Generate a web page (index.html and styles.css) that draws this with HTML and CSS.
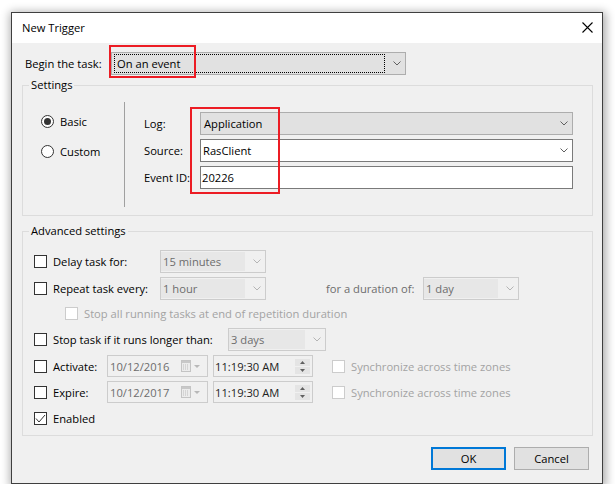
FILE: index.html
```html
<!DOCTYPE html>
<html>
<head>
<meta charset="utf-8">
<title>New Trigger</title>
<link rel="stylesheet" href="styles.css">
</head>
<body>
<div class="window">
  <div class="titlebar">
    <span class="title">New Trigger</span>
    <svg class="close" width="11" height="11" viewBox="0 0 11 11"><path d="M0.5 0.5L10.5 10.5M10.5 0.5L0.5 10.5" stroke="#000" stroke-width="1.1" fill="none"/></svg>
  </div>
  <div class="content">
    <div class="begin-row">
      <span class="begin-label">Begin the task:</span>
      <div class="combo combo-begin">
        <span class="focus">On an event</span>
        <span class="chev"><svg width="8" height="5" viewBox="0 0 8 5"><polyline points="0.5,0.5 4,4 7.5,0.5" fill="none" stroke="#606060" stroke-width="1"/></svg></span>
        <span class="highlight hl-begin"></span>
      </div>
    </div>

    <div class="group settings">
      <div class="group-title">Settings</div>
      <div class="settings-body">
        <div class="radios">
          <div class="radio-row"><span class="radio checked"><span class="dot"></span></span><span>Basic</span></div>
          <div class="radio-row"><span class="radio"></span><span>Custom</span></div>
        </div>
        <div class="sep"></div>
        <div class="fields">
          <span class="flabel">Log:</span>
          <div class="combo combo-gray"><span class="val">Application</span><span class="chev"><svg width="8" height="5" viewBox="0 0 8 5"><polyline points="0.5,0.5 4,4 7.5,0.5" fill="none" stroke="#606060" stroke-width="1"/></svg></span></div>
          <span class="flabel">Source:</span>
          <div class="combo combo-white"><span class="val">RasClient</span><span class="chev"><svg width="8" height="5" viewBox="0 0 8 5"><polyline points="0.5,0.5 4,4 7.5,0.5" fill="none" stroke="#606060" stroke-width="1"/></svg></span></div>
          <span class="flabel">Event ID:</span>
          <div class="combo combo-white textbox"><span class="val">20226</span></div>
          <span class="highlight hl-fields"></span>
        </div>
      </div>
    </div>

    <div class="group advanced">
      <div class="group-title">Advanced settings</div>

      <div class="arow r1">
        <span class="cb"></span>
        <span class="alabel w-delay">Delay task for:</span>
        <div class="combo dis w106"><span class="val">15 minutes</span><span class="chev"><svg width="8" height="5" viewBox="0 0 8 5"><polyline points="0.5,0.5 4,4 7.5,0.5" fill="none" stroke="#b4b4b4" stroke-width="1"/></svg></span></div>
      </div>

      <div class="arow r2">
        <span class="cb"></span>
        <span class="alabel w-delay">Repeat task every:</span>
        <div class="combo dis w106"><span class="val">1 hour</span><span class="chev"><svg width="8" height="5" viewBox="0 0 8 5"><polyline points="0.5,0.5 4,4 7.5,0.5" fill="none" stroke="#b4b4b4" stroke-width="1"/></svg></span></div>
        <span class="dur-label">for a duration of:</span>
        <div class="combo dis w96"><span class="val">1 day</span><span class="chev"><svg width="8" height="5" viewBox="0 0 8 5"><polyline points="0.5,0.5 4,4 7.5,0.5" fill="none" stroke="#b4b4b4" stroke-width="1"/></svg></span></div>
      </div>

      <div class="arow r3">
        <span class="cb dis"></span>
        <span class="alabel muted">Stop all running tasks at end of repetition duration</span>
      </div>

      <div class="arow r4">
        <span class="cb"></span>
        <span class="alabel w-stop">Stop task if it runs longer than:</span>
        <div class="combo dis w98"><span class="val">3 days</span><span class="chev"><svg width="8" height="5" viewBox="0 0 8 5"><polyline points="0.5,0.5 4,4 7.5,0.5" fill="none" stroke="#b4b4b4" stroke-width="1"/></svg></span></div>
      </div>

      <div class="arow dtrow r5">
        <span class="cb"></span>
        <span class="alabel w-act">Activate:</span>
        <div class="dtp date"><span class="dval">10/12/2016</span>
          <svg class="cal" width="20" height="12" viewBox="0 0 20 12"><rect x="0.5" y="0.5" width="9" height="11" fill="#ececec" stroke="#c4c4c4"/><rect x="1" y="1" width="8" height="2" fill="#c8c8c8"/><path d="M2 5h1M4 5h1M6 5h1M2 7h1M4 7h1M6 7h1M2 9h1M4 9h1M6 9h1" stroke="#bdbdbd" stroke-width="1"/><polygon points="13,5 19,5 16,8" fill="#b8b8b8"/></svg>
        </div>
        <div class="dtp time"><span class="tval">11:19:30 AM</span>
          <span class="spin"><span class="sbtn"><svg width="5" height="3" viewBox="0 0 5 3"><polygon points="0,3 5,3 2.5,0" fill="#606060"/></svg></span><span class="sbtn"><svg width="5" height="3" viewBox="0 0 5 3"><polygon points="0,0 5,0 2.5,3" fill="#606060"/></svg></span></span>
        </div>
        <span class="cb dis sync"></span>
        <span class="alabel muted">Synchronize across time zones</span>
      </div>

      <div class="arow dtrow r6">
        <span class="cb"></span>
        <span class="alabel w-act">Expire:</span>
        <div class="dtp date"><span class="dval">10/12/2017</span>
          <svg class="cal" width="20" height="12" viewBox="0 0 20 12"><rect x="0.5" y="0.5" width="9" height="11" fill="#ececec" stroke="#c4c4c4"/><rect x="1" y="1" width="8" height="2" fill="#c8c8c8"/><path d="M2 5h1M4 5h1M6 5h1M2 7h1M4 7h1M6 7h1M2 9h1M4 9h1M6 9h1" stroke="#bdbdbd" stroke-width="1"/><polygon points="13,5 19,5 16,8" fill="#b8b8b8"/></svg>
        </div>
        <div class="dtp time"><span class="tval">11:19:30 AM</span>
          <span class="spin"><span class="sbtn"><svg width="5" height="3" viewBox="0 0 5 3"><polygon points="0,3 5,3 2.5,0" fill="#606060"/></svg></span><span class="sbtn"><svg width="5" height="3" viewBox="0 0 5 3"><polygon points="0,0 5,0 2.5,3" fill="#606060"/></svg></span></span>
        </div>
        <span class="cb dis sync"></span>
        <span class="alabel muted">Synchronize across time zones</span>
      </div>

      <div class="arow r7">
        <span class="cb"><svg width="11" height="11" viewBox="0 0 11 11"><polyline points="1,5.5 4,9 10,2" fill="none" stroke="#333" stroke-width="1"/></svg></span>
        <span class="alabel">Enabled</span>
      </div>
    </div>

    <div class="buttons">
      <div class="btn btn-ok">OK</div>
      <div class="btn">Cancel</div>
    </div>
  </div>
</div>
</body>
</html>
```

FILE: styles.css
```css
* { box-sizing: border-box; }
html, body { margin: 0; }
body {
  background: #ffffff;
  padding: 12px 0 0 11px;
  font-family: "Open Sans", "Noto Sans", sans-serif;
  font-size: 11.2px;
  color: #000;
}
.window {
  width: 592px;
  height: 472px;
  border: 1px solid #3f3f3f;
  background: #f0f0f0;
  box-shadow: 1px 2px 9px 2px rgba(0, 0, 0, 0.33);
  display: flex;
  flex-direction: column;
}
.titlebar {
  flex: none;
  height: 30px;
  background: #fff;
  display: flex;
  align-items: center;
  justify-content: space-between;
  padding: 0 9px 1px 10px;
}
.close { display: block; }
.content { padding: 0 9px 0 10px; }

/* combos */
.combo {
  position: relative;
  display: flex;
  align-items: center;
  height: 23px;
  border: 1px solid #adadad;
}
.chev {
  flex: none;
  width: 20px;
  height: 100%;
  display: flex;
  align-items: center;
  padding-left: 8px;
}
.chev svg { display: block; }
.val { flex: 1; white-space: nowrap; }

.begin-row {
  display: flex;
  align-items: center;
  margin-top: 9px;
  height: 23px;
}
.begin-label { margin-left: 3px; width: 86px; }
.combo-begin { width: 295px; background: #e1e1e1; }
.focus {
  margin-left: 2px;
  height: 19px;
  width: 271px;
  border: 1px dotted #000;
  display: flex;
  align-items: center;
  padding-left: 2px;
}

.highlight {
  position: absolute;
  border: 2px solid #ec1c24;
  pointer-events: none;
}
.hl-begin { left: -3px; top: -8px; width: 87px; height: 33px; }
.hl-fields { left: 65px; top: 5px; width: 90px; height: 87px; }

/* group boxes */
.group { border: 1px solid #dcdcdc; }
.group-title {
  width: fit-content;
  margin: -9px 0 -7px 6px;
  padding: 0 2px;
  line-height: 16px;
  height: 16px;
  background: #f0f0f0;
}
.settings { margin-top: 10px; }
.settings-body {
  display: flex;
  padding: 16px 19px 8px 0;
}
.radios {
  width: 101px;
  padding: 11px 0 0 18px;
  display: flex;
  flex-direction: column;
  gap: 14px;
}
.radio-row { display: flex; align-items: center; height: 16px; gap: 6px; }
.radio {
  width: 13px;
  height: 13px;
  border: 1px solid #333;
  border-radius: 50%;
  background: #fff;
  display: flex;
  align-items: center;
  justify-content: center;
}
.dot { width: 7px; height: 7px; border-radius: 50%; background: #333; }
.sep { width: 1px; height: 105px; background: #a0a0a0; flex: none; }
.fields {
  position: relative;
  flex: 1;
  display: grid;
  grid-template-columns: 56px 1fr;
  grid-auto-rows: 23px;
  row-gap: 4px;
  align-items: center;
  padding: 10px 0 0 19px;
}
.combo-gray { background: #e1e1e1; border-color: #adadad; }
.combo-gray .val { padding-left: 3px; }
.combo-white { background: #fff; border-color: #7a7a7a; }
.combo-white .val { padding-left: 2px; }
.textbox .val { padding-left: 1px; }

/* advanced */
.advanced { margin-top: 15px; padding: 0 0 5px 11px; }
.advanced .group-title { margin-left: -5px; }
.arow { display: flex; align-items: center; height: 23px; }
.arow.dtrow { height: 22px; }
.r1 { margin-top: 18px; }
.r2 { margin-top: 4px; }
.r3 { margin-top: 2px; padding-left: 31px; }
.r4 { margin-top: 3px; }
.r5 { margin-top: 4px; }
.r6 { margin-top: 4px; }
.r7 { margin-top: 4px; }

.cb {
  flex: none;
  width: 13px;
  height: 13px;
  border: 1px solid #333;
  background: #fff;
}
.cb svg { display: block; }
.cb.dis { border-color: #cccccc; }
.alabel { margin-left: 6px; white-space: nowrap; flex: none; }
.muted { color: #a3a3a3; }
.w-delay { width: 107px; }
.w-stop { width: 175px; }
.w-act { width: 54px; }

.combo.dis { border-color: #cccccc; background: #f0f0f0; color: #6d6d6d; }
.combo.dis .val {
  align-self: stretch;
  margin: 1px 0 1px 0;
  padding-left: 2px;
  background: #e7e7e7;
  display: flex;
  align-items: center;
}
.w106 { width: 106px; }
.w96 { width: 96px; }
.w98 { width: 98px; }
.dur-label { margin-left: 60px; width: 97px; color: #6d6d6d; flex: none; }

.dtp {
  flex: none;
  height: 22px;
  border: 1px solid #cccccc;
  display: flex;
  align-items: center;
}
.date { width: 101px; padding-left: 2px; color: #6d6d6d; }
.dval { flex: 1; }
.cal { display: block; margin-right: 6px; }
.time { width: 100px; margin-left: 5px; padding-left: 1px; color: #222; }
.tval { flex: 1; }
.spin {
  display: flex;
  flex-direction: column;
  gap: 1px;
  margin-right: 2px;
}
.sbtn {
  width: 15px;
  height: 7px;
  background: #e4e4e4;
  display: flex;
  align-items: center;
  justify-content: center;
}
.sbtn svg { display: block; }
.cb.sync { margin-left: 19px; }

/* buttons */
.buttons {
  display: flex;
  justify-content: flex-end;
  gap: 8px;
  margin: 11px 4px 0 0;
}
.btn {
  width: 75px;
  height: 23px;
  background: #e1e1e1;
  border: 1px solid #adadad;
  display: flex;
  align-items: center;
  justify-content: center;
}
.btn-ok { border: 2px solid #0078d7; }
```
